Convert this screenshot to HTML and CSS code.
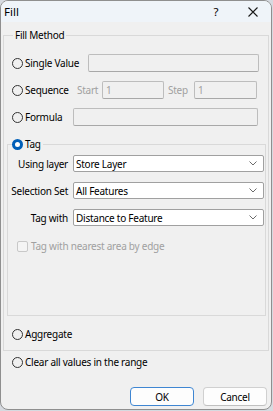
FILE: index.html
```html
<!DOCTYPE html>
<html>
<head>
<meta charset="utf-8">
<link rel="stylesheet" href="styles.css">
</head>
<body>
<div class="window">
  <div class="titlebar">
    <span class="title">Fill</span>
    <span class="help">?</span>
    <span class="close"><svg width="10" height="10" viewBox="0 0 10 10"><path d="M0.5 0.5L9.5 9.5M9.5 0.5L0.5 9.5" stroke="#1a1a1a" stroke-width="1.1" fill="none"/></svg></span>
  </div>
  <fieldset class="group outer">
    <legend class="legend-text">Fill Method</legend>
    <div class="row">
      <span class="radio"></span><span class="lbl lbl-single">Single Value</span>
      <span class="box box-single"></span>
    </div>
    <div class="row">
      <span class="radio"></span><span class="lbl lbl-seq">Sequence</span>
      <span class="dim lbl-start">Start</span><span class="box box-start">1</span>
      <span class="dim lbl-step">Step</span><span class="box box-step">1</span>
    </div>
    <div class="row">
      <span class="radio"></span><span class="lbl lbl-formula">Formula</span>
      <span class="box box-formula"></span>
    </div>
    <fieldset class="group inner">
      <legend class="legend-radio"><span class="radio checked"></span><span class="lbl">Tag</span></legend>
      <div class="form-grid">
        <span class="flabel">Using layer</span>
        <span class="combo">Store Layer<svg class="chev" width="8" height="5" viewBox="0 0 8 5"><path d="M0.5 0.5L4 4L7.5 0.5" stroke="#6b6b6b" stroke-width="1" fill="none"/></svg></span>
        <span class="flabel">Selection Set</span>
        <span class="combo">All Features<svg class="chev" width="8" height="5" viewBox="0 0 8 5"><path d="M0.5 0.5L4 4L7.5 0.5" stroke="#6b6b6b" stroke-width="1" fill="none"/></svg></span>
        <span class="flabel">Tag with</span>
        <span class="combo">Distance to Feature<svg class="chev" width="8" height="5" viewBox="0 0 8 5"><path d="M0.5 0.5L4 4L7.5 0.5" stroke="#6b6b6b" stroke-width="1" fill="none"/></svg></span>
      </div>
      <div class="check-row">
        <span class="checkbox"></span><span class="dim">Tag with nearest area by edge</span>
      </div>
    </fieldset>
    <div class="row row-agg">
      <span class="radio"></span><span class="lbl">Aggregate</span>
    </div>
  </fieldset>
  <div class="row row-clear">
    <span class="radio"></span><span class="lbl">Clear all values in the range</span>
  </div>
  <div class="buttons">
    <span class="btn btn-default">OK</span>
    <span class="btn">Cancel</span>
  </div>
</div>
</body>
</html>
```
FILE: styles.css
```css
* { box-sizing: border-box; }
html { background: #d6dae0; }
body {
  margin: 0;
  font-family: "Noto Sans", "Open Sans", sans-serif;
  font-size: 10px;
  letter-spacing: -0.25px;
  line-height: 14px;
  color: #000;
}
.window {
  width: 272px;
  height: 410px;
  border: 1px solid #8f8f8f;
  border-radius: 8px;
  background: #f0f0f0;
  overflow: hidden;
}
.titlebar {
  height: 21px;
  background: #eff4f9;
  display: flex;
  align-items: center;
  padding-left: 3px;
  font-size: 11.5px;
  letter-spacing: 0;
}
.title { flex: 1; }
.help { width: 12px; text-align: center; margin-right: 26px; }
.close { display: flex; margin-right: 13px; }

.group {
  margin: 0;
  border: 1px solid #d9d9d9;
  min-width: 0;
}
.outer {
  margin: 6px 2px 0 2px;
  padding: 12px 2px 9px 3px;
}
.legend-text { padding: 0 2px; margin-left: 6px; }

.row {
  display: flex;
  align-items: center;
  height: 18px;
  padding: 0 7px 0 5px;
}
.row + .row { margin-top: 9px; }
.radio {
  width: 11px;
  height: 11px;
  border: 1px solid #333;
  border-radius: 50%;
  margin-right: 2px;
  flex: none;
}
.radio.checked { border: 3.5px solid #005fb8; background: #fff; }
.lbl { white-space: nowrap; }
.lbl-single { width: 63px; }
.lbl-seq { width: 52px; }
.lbl-formula { width: 48px; }
.dim { color: #a0a0a0; white-space: nowrap; }
.lbl-start { width: 25px; }
.lbl-step { width: 26px; margin-left: 4px; }
.box {
  height: 18px;
  border: 1px solid #bdbdbd;
  border-bottom-color: #a8a8a8;
  border-radius: 2px;
  background: #f0f0f0;
  color: #a0a0a0;
  padding-left: 3px;
  line-height: 16px;
}
.box-single { flex: 1; }
.box-start { width: 62px; }
.box-step { width: 63px; }
.box-formula { flex: 1; margin-right: 1px; }

.inner {
  margin: 11px 0 0 0;
  padding: 4px 1px 62px 0;
}
.legend-radio {
  display: flex;
  align-items: center;
  padding: 0 2px 0 0;
  margin-left: 4px;
}
.form-grid {
  display: grid;
  grid-template-columns: 60px 1fr;
  column-gap: 5px;
  row-gap: 10px;
  align-items: center;
}
.flabel { text-align: right; white-space: nowrap; }
.combo {
  height: 17px;
  border: 1px solid #a0a0a0;
  border-radius: 2px;
  background: #fff;
  display: flex;
  align-items: center;
  padding: 0 6px 0 2px;
  justify-content: space-between;
}
.check-row {
  display: flex;
  align-items: center;
  height: 14px;
  margin-top: 13px;
  padding-left: 9px;
}
.checkbox {
  width: 11px;
  height: 11px;
  border: 1px solid #c8c8c8;
  border-radius: 2px;
  background: #f4f4f4;
  margin-right: 3px;
}
.row-agg { margin-top: 11px; height: 14px; }
.row-clear { margin-top: 4px; height: 14px; padding-left: 11px; }

.buttons {
  display: flex;
  justify-content: flex-end;
  gap: 9px;
  margin-top: 18px;
  padding-right: 4px;
}
.btn {
  width: 64px;
  height: 19px;
  border: 1px solid #d0d0d0;
  border-bottom-color: #c0c0c0;
  border-radius: 4px;
  background: #fdfdfd;
  display: flex;
  align-items: center;
  justify-content: center;
}
.btn-default { border-color: #3f86d2; }
```
